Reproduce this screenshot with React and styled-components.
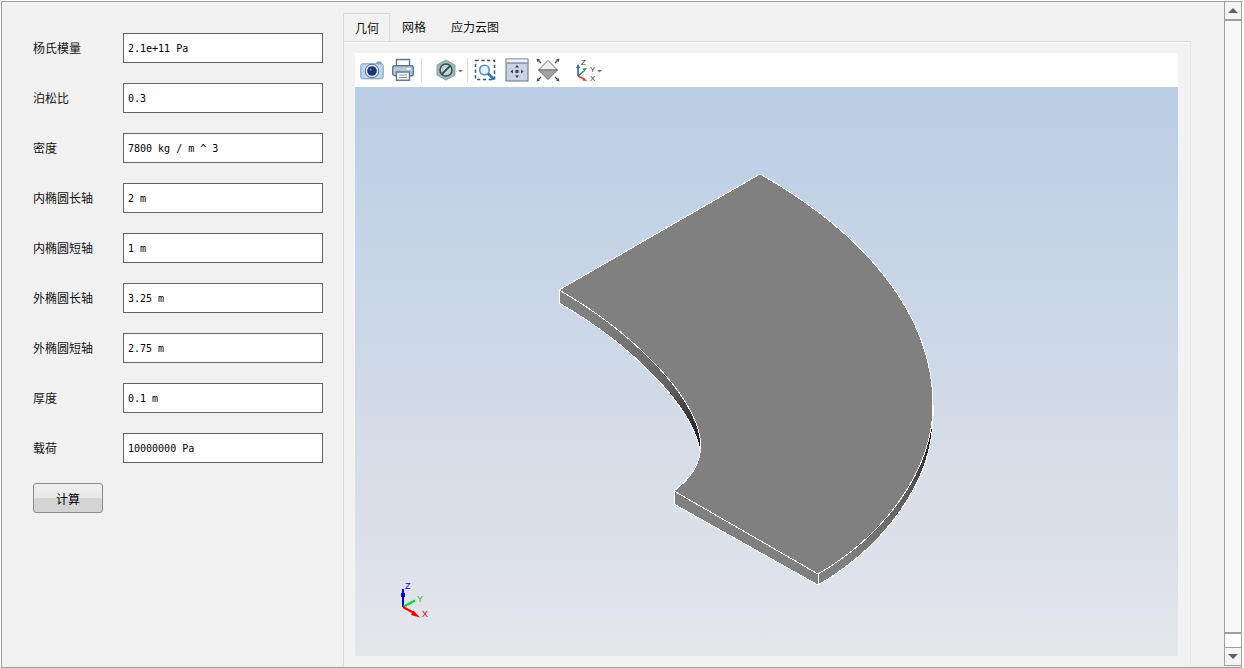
import styled, { createGlobalStyle } from "styled-components";

const GlobalStyle = createGlobalStyle`
  html, body {
    margin: 0;
    background: #fff;
  }
  body {
    font-family: "Noto Sans CJK SC", "Liberation Sans", sans-serif;
    font-size: 12px;
    color: #111;
  }
`;

const Window = styled.div`
  display: flex;
  box-sizing: border-box;
  width: 1241px;
  height: 667px;
  margin: 1px 0 0 1px;
  border: 1px solid #a0a0a0;
  background: #f1f1f1;
  overflow: hidden;
`;

const FormPanel = styled.div`
  box-sizing: border-box;
  width: 341px;
  flex: none;
  padding: 31px 0 0 31px;
  display: flex;
  flex-direction: column;
  gap: 20px;
`;

const FormRow = styled.div`
  display: flex;
  align-items: center;
  height: 30px;
`;

const FieldLabel = styled.label`
  width: 90px;
  flex: none;
  line-height: 16px;
`;

const FieldInput = styled.input`
  box-sizing: border-box;
  width: 200px;
  height: 30px;
  padding: 0 4px;
  border: 1px solid #646464;
  border-radius: 0;
  outline: none;
  background: #fff;
  color: #000;
  font-family: "DejaVu Sans Mono", monospace;
  font-size: 10px;
`;

const SolveButton = styled.button`
  box-sizing: border-box;
  width: 70px;
  height: 30px;
  padding: 0;
  border: 1px solid #8c8c8c;
  border-radius: 3px;
  background: linear-gradient(to bottom, #f0f0f0 0%, #e8e8e8 48%, #d4d4d4 50%, #d4d4d4 100%);
  color: #000;
  font-family: inherit;
  font-size: 12px;
`;

const TabColumn = styled.div`
  width: 848px;
  flex: none;
  padding-top: 11px;
  display: flex;
  flex-direction: column;
`;

const TabBar = styled.div`
  display: flex;
  height: 28px;
  flex: none;
`;

const Tab = styled.div`
  box-sizing: border-box;
  height: 28px;
  line-height: 27px;
  padding: ${(props) => (props.$active ? "0 10px 0 11px" : "0 12px")};
  margin-left: ${(props) => (props.$spaced ? "1px" : "0")};
  border: ${(props) => (props.$active ? "1px solid #d9d9d9" : "none")};
  border-bottom: none;
  background: ${(props) => (props.$active ? "#f2f2f2" : "transparent")};
`;

const TabPane = styled.div`
  flex: 1;
  box-sizing: border-box;
  padding: 11px 12px 11px 11px;
  border-top: 1px solid #d9d9d9;
  border-left: 1px solid #d9d9d9;
  border-right: 1px solid #e8e8e8;
  background: #f2f2f2;
  box-shadow: inset 0 1px 0 #fbfbfb;
  display: flex;
  flex-direction: column;
`;

const Toolbar = styled.div`
  height: 34px;
  flex: none;
  background: #fff;
  display: flex;
  align-items: center;
  padding-left: 1px;
`;

const ToolButton = styled.div`
  width: ${(props) => props.$w}px;
  height: 24px;
  flex: none;
  display: flex;
  justify-content: center;

  svg {
    display: block;
  }
`;

const ToolSeparator = styled.div`
  width: 1px;
  height: 24px;
  flex: none;
  margin: 0 ${(props) => props.$right}px 0 ${(props) => props.$left}px;
  background: #dcdcdc;
`;

const Viewport = styled.div`
  position: relative;
  flex: 1;
  background: linear-gradient(to bottom, #baCDE4 0%, #e4e6ea 100%);
  overflow: hidden;

  svg {
    display: block;
  }
`;

const ScrollBar = styled.div`
  width: 17px;
  flex: none;
  box-sizing: border-box;
  margin-left: 33px;
  height: 664px;
  border-left: 1px solid #a0a0a0;
  border-bottom: 1px solid #a0a0a0;
  display: flex;
  flex-direction: column;
  background: #fff;
`;

const ScrollStep = styled.div`
  height: 17px;
  flex: none;
  display: flex;
  align-items: center;
  justify-content: center;
  background: #f5f5f5;
`;

const Arrow = styled.div`
  width: 0;
  height: 0;
  border-left: 5px solid transparent;
  border-right: 5px solid transparent;
  border-bottom: ${(props) => (props.$down ? "none" : "5px solid #606060")};
  border-top: ${(props) => (props.$down ? "5px solid #606060" : "none")};
`;

const ScrollThumb = styled.div`
  flex: 1;
  background: #f8f8f8;
  border-top: 2px solid #a0a0a0;
  border-bottom: 2px solid #a0a0a0;
`;

const ScrollRest = styled.div`
  height: 13px;
  flex: none;
  background: #fff;
  border-bottom: 1px solid #a0a0a0;
`;

const fields = [
  ["杨氏模量", "2.1e+11 Pa"],
  ["泊松比", "0.3"],
  ["密度", "7800 kg / m ^ 3"],
  ["内椭圆长轴", "2 m"],
  ["内椭圆短轴", "1 m"],
  ["外椭圆长轴", "3.25 m"],
  ["外椭圆短轴", "2.75 m"],
  ["厚度", "0.1 m"],
  ["载荷", "10000000 Pa"],
];

function CameraIcon() {
  return (
    <svg width="24" height="24" viewBox="0 0 24 24">
      <path d="M16.5 3.5h5v3h-5z" fill="#8aa3bf" />
      <rect x="0.8" y="5.8" width="22.4" height="15" rx="2" fill="#c2d4e8" stroke="#7d98b6" />
      <circle cx="12" cy="13" r="6.8" fill="#dfe8f2" stroke="#4e6f9f" />
      <circle cx="12" cy="13" r="4.8" fill="#1d3570" />
      <circle cx="10.6" cy="11.6" r="0.9" fill="#8ea6cf" />
    </svg>
  );
}

function PrinterIcon() {
  return (
    <svg width="24" height="24" viewBox="0 0 24 24">
      <path d="M5.5 8V1.5h13V8" fill="#fff" stroke="#5f7890" strokeWidth="1.4" />
      <rect x="1.7" y="7.7" width="20.6" height="10" rx="2" fill="#b9c7d6" stroke="#5f7890" strokeWidth="1.4" />
      <rect x="16" y="10" width="4" height="1.5" fill="#fff" />
      <path d="M5.5 14h13v8.3h-13z" fill="#fff" stroke="#5f7890" strokeWidth="1.4" />
      <path d="M8 17h8M8 19.5h8" stroke="#7d93a8" />
    </svg>
  );
}

function CaretIcon({ x, y }) {
  return <path d={`M${x} ${y}h5l-2.5 2.5z`} fill="#777" />;
}

function ClipIcon() {
  return (
    <svg width="38" height="24" viewBox="-9 0 38 24">
      <path d="M10 2l9 5v10l-9 5-9-5V7z" fill="#9db8b9" stroke="#86a4a6" />
      <circle cx="10" cy="12" r="6" fill="#c3d3d5" stroke="#34505a" strokeWidth="1.6" />
      <path d="M6 16l8-8" stroke="#34505a" strokeWidth="1.8" />
      <CaretIcon x={22} y={12} />
    </svg>
  );
}

function ZoomBoxIcon() {
  return (
    <svg width="24" height="24" viewBox="0 0 24 24">
      <rect x="2.5" y="2.5" width="19" height="19" fill="none" stroke="#3c4f6e" strokeWidth="1.5" strokeDasharray="3.2 2.6" />
      <circle cx="11.5" cy="12" r="4.8" fill="#e8f2fa" stroke="#4f8fc4" strokeWidth="1.6" />
      <path d="M15 15.5l6 6" stroke="#2e78b8" strokeWidth="2.6" />
    </svg>
  );
}

function FitIcon() {
  return (
    <svg width="24" height="24" viewBox="0 0 24 24">
      <rect x="1" y="1" width="22" height="22" fill="#c9d3df" stroke="#5d7088" />
      <path d="M1.5 1.5h21v3h-21z" fill="#eef1f5" />
      <path d="M1.5 5h21" stroke="#5d7088" />
      <path d="M12 7l-2 2.4h4zM12 20l-2-2.4h4zM5.5 13.5l2.4-2v4zM18.5 13.5l-2.4-2v4z" fill="#2f3f58" />
      <rect x="10.5" y="12" width="3" height="3" fill="#2f3f58" />
    </svg>
  );
}

function IsoIcon() {
  return (
    <svg width="24" height="24" viewBox="0 0 24 24">
      <path d="M12 2.5l9.5 9.5h-19z" fill="#f0f0f0" stroke="#6e6e6e" />
      <path d="M2.5 12h19L12 21.5z" fill="#a3a3a3" stroke="#6e6e6e" />
      <path d="M0.5 0.5l3.5 1-2.5 2.5zM23.5 0.5l-3.5 1 2.5 2.5zM0.5 23.5l3.5-1-2.5-2.5zM23.5 23.5l-3.5-1 2.5-2.5z" fill="#34496a" />
      <path d="M2.5 2.5l2.5 2.5M21.5 2.5L19 5M2.5 21.5L5 19M21.5 21.5L19 19" stroke="#34496a" strokeWidth="1.3" />
    </svg>
  );
}

const AxisLabel = styled.text`
  font-family: "Liberation Sans", sans-serif;
  font-size: ${(props) => props.$size}px;
  fill: ${(props) => props.$color};
`;

function AxesIcon() {
  return (
    <svg width="44" height="24" viewBox="0 0 44 24">
      <path d="M15 18V9" stroke="#2b5fb0" strokeWidth="1.6" />
      <path d="M15 6l-2 4h4z" fill="#2b5fb0" />
      <path d="M15 18l6-5" stroke="#1f9a5a" strokeWidth="1.6" />
      <path d="M24 10l-4.5.6 2 2.8z" fill="#1f9a5a" />
      <path d="M15 18l6 3" stroke="#e03a3a" strokeWidth="1.6" />
      <path d="M24 23l-4.5-.4 1.2-3z" fill="#e03a3a" />
      <AxisLabel x="18" y="6.5" $size={8} $color="#333">Z</AxisLabel>
      <AxisLabel x="27" y="13.5" $size={8} $color="#333">Y</AxisLabel>
      <AxisLabel x="27" y="22.5" $size={8} $color="#333">X</AxisLabel>
      <CaretIcon x={34} y={12} />
    </svg>
  );
}

function PartDrawing() {
  // coordinates are page pixels, the viewBox starts where the viewport starts
  const top =
    "M760 174C862 232 933 312 933 405C933 470 885 535 818 574L674 491C690 479 701 465 701 443C695 390 622 326 559 290Z";
  const innerLower = "C622 339 695 403 701 456";
  const innerSide = "M559 290C622 326 695 390 701 443V456C695 403 622 339 559 303Z";
  const outerSide = "M933 405C933 470 885 535 818 574V585C885 546 933 481 933 416Z";
  return (
    <svg width="823" height="569" viewBox="355 87 823 569" shapeRendering="crispEdges">
      <defs>
        <linearGradient id="innerShade" gradientUnits="userSpaceOnUse" x1="600" y1="310" x2="700" y2="440">
          <stop offset="0" stopColor="#808080" />
          <stop offset="0.6" stopColor="#666" />
          <stop offset="1" stopColor="#1c1c1c" />
        </linearGradient>
        <linearGradient id="outerShade" gradientUnits="userSpaceOnUse" x1="850" y1="565" x2="932" y2="430">
          <stop offset="0" stopColor="#808080" />
          <stop offset="0.6" stopColor="#5c5c5c" />
          <stop offset="1" stopColor="#111" />
        </linearGradient>
      </defs>
      <path d={innerSide} fill="url(#innerShade)" />
      <path d={outerSide} fill="url(#outerShade)" />
      <path d="M674 491V504L818 585V574Z" fill="#808080" />
      <path d={`M559 290V303${innerLower}`} fill="none" stroke="#fff" />
      <path d="M674 491V504L818 585C885 546 933 481 933 416V405" fill="none" stroke="#fff" />
      <path d={top} fill="#808080" stroke="#fff" />
      <path d="M818 574V585" stroke="#fff" />
    </svg>
  );
}

const TriadWrap = styled.div`
  position: absolute;
  left: 40px;
  bottom: 30px;
  width: 40px;
  height: 46px;
`;

function Triad() {
  return (
    <TriadWrap>
      <svg width="40" height="46" viewBox="0 0 40 46">
        <path d="M8 27V9" stroke="#0000e0" strokeWidth="2" />
        <rect x="6" y="13" width="4" height="4" fill="#0000e0" />
        <path d="M8 27l12-6.5" stroke="#10d030" strokeWidth="2" />
        <path d="M8 27l10 5.5" stroke="#f00000" strokeWidth="2" />
        <path d="M25 37.5l-9-2.5 2.5-4.5z" fill="#f00000" />
        <AxisLabel x="10" y="9" $size={9} $color="#0000e0">Z</AxisLabel>
        <AxisLabel x="22" y="22" $size={9} $color="#10c030">Y</AxisLabel>
        <AxisLabel x="27" y="37" $size={9} $color="#e00000">X</AxisLabel>
      </svg>
    </TriadWrap>
  );
}

export default function App() {
  return (
    <>
      <GlobalStyle />
      <Window>
        <FormPanel>
          {fields.map(([label, value]) => (
            <FormRow key={label}>
              <FieldLabel>{label}</FieldLabel>
              <FieldInput defaultValue={value} />
            </FormRow>
          ))}
          <FormRow>
            <SolveButton>计算</SolveButton>
          </FormRow>
        </FormPanel>
        <TabColumn>
          <TabBar>
            <Tab $active>几何</Tab>
            <Tab>网格</Tab>
            <Tab $spaced>应力云图</Tab>
          </TabBar>
          <TabPane>
            <Toolbar>
              <ToolButton $w={31}><CameraIcon /></ToolButton>
              <ToolButton $w={31}><PrinterIcon /></ToolButton>
              <ToolSeparator $left={3} $right={4} />
              <ToolButton $w={39}><ClipIcon /></ToolButton>
              <ToolSeparator $left={2} $right={1} />
              <ToolButton $w={32}><ZoomBoxIcon /></ToolButton>
              <ToolButton $w={32}><FitIcon /></ToolButton>
              <ToolButton $w={30}><IsoIcon /></ToolButton>
              <ToolButton $w={44}><AxesIcon /></ToolButton>
            </Toolbar>
            <Viewport>
              <PartDrawing />
              <Triad />
            </Viewport>
          </TabPane>
        </TabColumn>
        <ScrollBar>
          <ScrollStep><Arrow /></ScrollStep>
          <ScrollThumb />
          <ScrollRest />
          <ScrollStep><Arrow $down /></ScrollStep>
        </ScrollBar>
      </Window>
    </>
  );
}
